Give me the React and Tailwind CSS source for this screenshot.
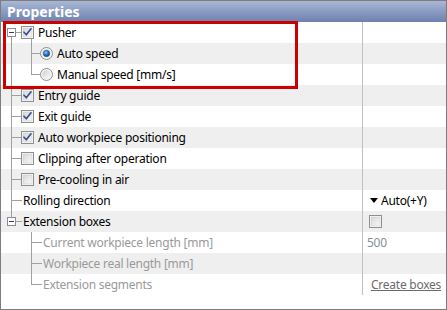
import React from "react";

const LINE = "#a0a0a0";

function Checkbox({ checked }) {
  return (
    <svg width="13" height="13" viewBox="0 0 13 13" className="shrink-0 block">
      <defs>
        <linearGradient id="cbg" x1="0" y1="0" x2="1" y2="1">
          <stop offset="0" stopColor="#d6d6d6" />
          <stop offset="1" stopColor="#fafafa" />
        </linearGradient>
      </defs>
      <rect x="0.5" y="0.5" width="12" height="12" fill="#ffffff" stroke="#8e8f8f" />
      <rect x="2" y="2" width="9" height="9" fill="url(#cbg)" stroke="#c9c9c9" strokeWidth="0.6" />
      {checked && (
        <path d="M3 6.2 L5.3 8.8 L10 2.8" fill="none" stroke="#3b5193" strokeWidth="1.7" strokeLinejoin="round" strokeLinecap="round" />
      )}
    </svg>
  );
}

function Radio({ checked }) {
  return (
    <svg width="13" height="13" viewBox="0 0 13 13" className="shrink-0 block">
      <defs>
        <linearGradient id="rbg" x1="0" y1="0" x2="1" y2="1">
          <stop offset="0" stopColor="#cfcfcf" />
          <stop offset="1" stopColor="#fbfbfb" />
        </linearGradient>
        <radialGradient id="rdot" cx="0.4" cy="0.35" r="0.7">
          <stop offset="0" stopColor="#8fd0ff" />
          <stop offset="0.5" stopColor="#1f78c8" />
          <stop offset="1" stopColor="#0d3f78" />
        </radialGradient>
      </defs>
      <circle cx="6.5" cy="6.5" r="6" fill="#f4f4f4" stroke="#8e8f8f" />
      <circle cx="6.5" cy="6.5" r="4.3" fill="url(#rbg)" />
      {checked && <circle cx="6.5" cy="6.5" r="3.2" fill="url(#rdot)" stroke="#1a4f8a" strokeWidth="0.5" />}
    </svg>
  );
}

function Expander() {
  return (
    <g>
      <rect x="6.5" y="6.5" width="8" height="8" fill="#ffffff" stroke="#8d8d8d" />
      <line x1="8" y1="10.5" x2="13" y2="10.5" stroke="#2c3e6a" />
    </g>
  );
}

function Tree({ type }) {
  const v = (x, y1, y2) => <line x1={x} y1={y1} x2={x} y2={y2} stroke={LINE} />;
  const h = (x1, x2) => <line x1={x1} y1="10.5" x2={x2} y2="10.5" stroke={LINE} />;
  let content = null;
  switch (type) {
    case "rootExpCheck":
      content = (
        <>
          {v(10.5, 15, 21)}
          {h(15, 20)}
          {v(30.5, 17, 21)}
          <Expander />
        </>
      );
      break;
    case "childFull":
      content = (
        <>
          {v(10.5, 0, 21)}
          {v(30.5, 0, 21)}
          {h(30.5, 39)}
        </>
      );
      break;
    case "childLast":
      content = (
        <>
          {v(10.5, 0, 21)}
          {v(30.5, 0, 11)}
          {h(30.5, 39)}
        </>
      );
      break;
    case "rootCheck":
      content = (
        <>
          {v(10.5, 0, 21)}
          {h(10.5, 20)}
        </>
      );
      break;
    case "rootText":
      content = (
        <>
          {v(10.5, 0, 21)}
          {h(10.5, 21)}
        </>
      );
      break;
    case "rootLastExp":
      content = (
        <>
          {v(10.5, 0, 6)}
          {h(15, 21)}
          <Expander />
        </>
      );
      break;
    case "subFull":
      content = (
        <>
          {v(30.5, 0, 21)}
          {h(30.5, 41)}
        </>
      );
      break;
    case "subLast":
      content = (
        <>
          {v(30.5, 0, 11)}
          {h(30.5, 41)}
        </>
      );
      break;
    default:
      break;
  }
  return (
    <svg width="44" height="21" className="absolute left-0 top-0 pointer-events-none" shapeRendering="crispEdges">
      {content}
    </svg>
  );
}

const rows = [
  { tree: "rootExpCheck", ctrl: "check", checked: true, label: "Pusher", pl: "pl-[20px]" },
  { tree: "childFull", ctrl: "radio", checked: true, label: "Auto speed", pl: "pl-[39px]" },
  { tree: "childLast", ctrl: "radio", checked: false, label: "Manual speed [mm/s]", pl: "pl-[39px]" },
  { tree: "rootCheck", ctrl: "check", checked: true, label: "Entry guide", pl: "pl-[20px]" },
  { tree: "rootCheck", ctrl: "check", checked: true, label: "Exit guide", pl: "pl-[20px]" },
  { tree: "rootCheck", ctrl: "check", checked: true, label: "Auto workpiece positioning", pl: "pl-[20px]" },
  { tree: "rootCheck", ctrl: "check", checked: false, label: "Clipping after operation", pl: "pl-[20px]" },
  { tree: "rootCheck", ctrl: "check", checked: false, label: "Pre-cooling in air", pl: "pl-[20px]" },
  { tree: "rootText", label: "Rolling direction", pl: "pl-[22px]", value: "dropdown" },
  { tree: "rootLastExp", label: "Extension boxes", pl: "pl-[22px]", value: "checkbox" },
  { tree: "subFull", label: "Current workpiece length [mm]", pl: "pl-[42px]", gray: true, value: "500" },
  { tree: "subFull", label: "Workpiece real length [mm]", pl: "pl-[42px]", gray: true },
  { tree: "subLast", label: "Extension segments", pl: "pl-[42px]", gray: true, value: "link" },
];

function Value({ kind }) {
  if (kind === "dropdown")
    return (
      <div className="flex items-center pl-[7px]">
        <svg width="8" height="5" viewBox="0 0 8 5" className="block mr-[3px]">
          <path d="M0 0 H8 L4 5 Z" fill="#000" />
        </svg>
        <span className="text-black">Auto(+Y)</span>
      </div>
    );
  if (kind === "checkbox")
    return (
      <div className="pl-[6px]">
        <Checkbox checked={false} />
      </div>
    );
  if (kind === "500") return <span className="pl-[4px] text-[#8a8f99]">500</span>;
  if (kind === "link") return <span className="pl-[8px] text-[#6b6b6b] underline">Create boxes</span>;
  return null;
}

export default function App() {
  return (
    <div
      className="relative w-[447px] h-[310px] border border-[#7d7d7d] bg-white flex flex-col text-[12px] leading-none tracking-[-0.25px]"
      style={{ fontFamily: '"Noto Sans", "Open Sans", sans-serif' }}
    >
      <div className="h-[21px] shrink-0 flex items-center pl-[6px] bg-gradient-to-b from-[#a9b7d5] to-[#6e82b0] text-white font-bold text-[14px] tracking-normal">
        Properties
      </div>
      {rows.map((r, i) => (
        <div key={i} className={`flex h-[21px] shrink-0 ${i % 2 === 1 ? "bg-[#efefef]" : "bg-white"}`}>
          <div className={`relative w-[362px] border-r border-[#c0c0c0] flex items-center ${r.pl}`}>
            <Tree type={r.tree} />
            {r.ctrl === "check" && <Checkbox checked={r.checked} />}
            {r.ctrl === "radio" && <Radio checked={r.checked} />}
            <span className={`${r.ctrl ? "ml-[4px]" : ""} whitespace-nowrap ${r.gray ? "text-[#9a9a9a]" : "text-black"}`}>
              {r.label}
            </span>
          </div>
          <div className="flex-1 flex items-center">{r.value && <Value kind={r.value} />}</div>
        </div>
      ))}
      <div className="flex-1" />
      <div className="absolute left-[2px] top-[20px] w-[295px] h-[68px] border-[3px] border-[#cc0000] pointer-events-none" />
    </div>
  );
}
